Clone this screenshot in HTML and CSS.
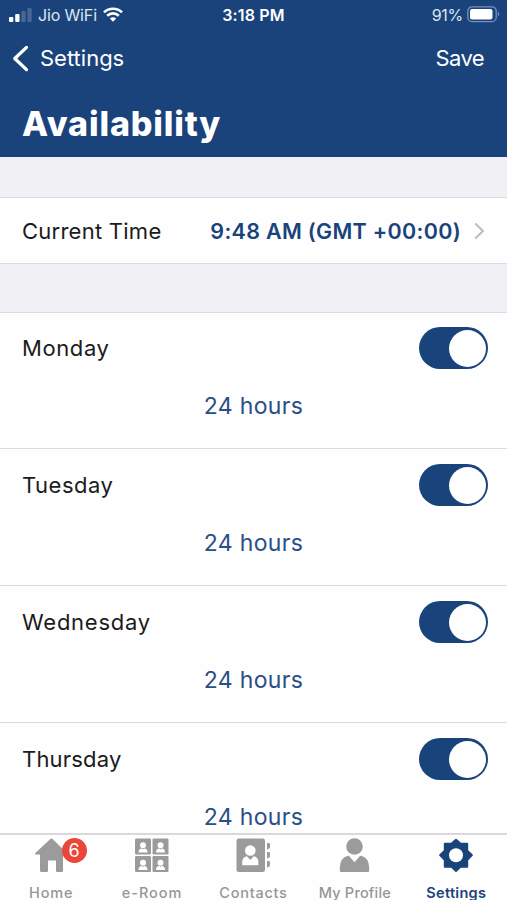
FILE: index.html
```html
<!DOCTYPE html>
<html lang="en">
<head>
<meta charset="utf-8">
<title>Availability</title>
<link rel="stylesheet" href="styles.css">
</head>
<body>
<div class="screen">
  <header class="header">
    <div class="status">
      <div class="status-left">
        <svg class="signal" width="23" height="14" viewBox="0 0 23 14" fill="#fff"><rect x="0" y="9" width="4.3" height="5" rx="1"/><rect x="6.2" y="6" width="4.3" height="8" rx="1"/><rect x="12.4" y="3" width="4.3" height="11" rx="1" opacity=".2"/><rect x="18.4" y="0" width="4.3" height="14" rx="1" opacity=".2"/></svg>
        <span class="carrier">Jio WiFi</span>
        <svg class="wifi" width="20" height="15" viewBox="0 0 20 15" fill="none" stroke="#fff" stroke-width="2.7"><path d="M1 5.4C6 .5 14 .5 19 5.4M4.2 8.8c3.3-3.2 8.3-3.2 11.6 0"/><path d="M6.8 11.4c1.8-1.7 4.6-1.7 6.4 0L10 14.7z" fill="#fff" stroke="none"/></svg>
      </div>
      <span class="clock">3:18 PM</span>
      <div class="status-right">
        <span class="percent">91%</span>
        <svg class="battery" width="33" height="17" viewBox="0 0 33 17"><rect x=".8" y=".8" width="28.4" height="14.8" rx="4.2" fill="none" stroke="#7592bb" stroke-width="1.3"/><rect x="3" y="3" width="22.5" height="10.5" rx="2" fill="#fff"/><path d="M30.8 5.5q3 2.5 0 5z" fill="#7592bb"/></svg>
      </div>
    </div>
    <nav class="nav">
      <div class="back">
        <svg width="17" height="27" viewBox="0 0 17 27" fill="none" stroke="#fff" stroke-width="3.3" stroke-linecap="round" stroke-linejoin="round"><path d="M14.500 2.400 2.800 13.500 14.500 24.600"/></svg>
        <span class="back-label">Settings</span>
      </div>
      <span class="save">Save</span>
    </nav>
    <h1 class="title">Availability</h1>
  </header>

  <main class="content">
    <section class="time-row">
      <span class="label current">Current Time</span>
      <span class="time">9:48 AM (GMT +00:00)</span>
      <svg class="chevron" width="11" height="18" viewBox="0 0 11 18" fill="none" stroke="#bfbfc3" stroke-width="2.2"><path d="m1.3 1.5 7.6 7.5-7.6 7.5"/></svg>
    </section>
    <section class="days">
      <div class="day first"><div class="day-head"><span class="label monday">Monday</span><span class="toggle"></span></div><div class="hours">24 hours</div></div>
      <div class="day"><div class="day-head"><span class="label tuesday">Tuesday</span><span class="toggle"></span></div><div class="hours">24 hours</div></div>
      <div class="day"><div class="day-head"><span class="label wednesday">Wednesday</span><span class="toggle"></span></div><div class="hours">24 hours</div></div>
      <div class="day"><div class="day-head"><span class="label thursday">Thursday</span><span class="toggle"></span></div><div class="hours">24 hours</div></div>
    </section>
  </main>

  <footer class="tabs">
    <div class="tab">
      <div class="icon">
        <svg width="36" height="36" viewBox="0 0 36 36" fill="#9b9b9b"><path d="M17.600.8q.8-.7 1.600 0L34 15q1.200 1.300-.6 1.400H30V32.500q0 1.500-1.500 1.500H24q-1 0-1-1V22.500h-8V33q0 1-1 1H8.500Q7 34 7 32.500V16.400H3q-1.800-.1-.6-1.400z"/></svg>
        <span class="badge">6</span>
      </div>
      <span class="tab-label home">Home</span>
    </div>
    <div class="tab">
      <div class="icon">
        <svg width="36" height="36" viewBox="0 0 36 36"><defs><g id="seat"><rect width="16" height="16" rx="1.2" fill="#9b9b9b"/><circle cx="8" cy="6.700" r="3" fill="#fff"/><path d="M3.500 14q0-3.800 3.500-4l1 1 1-1q3.500.2 3.500 4z" fill="#fff"/></g></defs><use href="#seat" x="1" y=".5"/><use href="#seat" x="18.500" y=".5"/><use href="#seat" x="1" y="18"/><use href="#seat" x="18.500" y="18"/></svg>
      </div>
      <span class="tab-label room">e-Room</span>
    </div>
    <div class="tab">
      <div class="icon">
        <svg width="36" height="36" viewBox="0 0 36 36"><rect x="1.500" y=".5" width="28.500" height="33.500" rx="2.200" fill="#9b9b9b"/><circle cx="15.300" cy="12.500" r="5.300" fill="#fff"/><path d="M7.200 26.500v-2q0-5.500 4.700-6.200l3.400 3.700 3.400-3.700q4.700.7 4.700 6.200v2q0 .7-.7.7H7.900q-.7 0-.7-.7z" fill="#fff"/><path d="M32 5h2q1 0 1 1v3.500q0 1-1 1l-2 1.200zM32 14h2q1 0 1 1v3.500q0 1-1 1l-2 1.200zM32 23h2q1 0 1 1v3.500q0 1-1 1l-2 1.200z" fill="#9b9b9b"/></svg>
      </div>
      <span class="tab-label contacts">Contacts</span>
    </div>
    <div class="tab">
      <div class="icon">
        <svg width="36" height="36" viewBox="0 0 36 36" fill="#9b9b9b"><circle cx="17.500" cy="8.500" r="8.300"/><path d="M10.900 17.800q.8-.3 1.400.5L17.500 24.200l5.200-5.900q.6-.8 1.400-.5Q32.200 20 32.200 30v2.500q0 1.500-1.500 1.500H4.300q-1.500 0-1.500-1.500V30q0-10 8.100-12.200z"/></svg>
      </div>
      <span class="tab-label profile">My Profile</span>
    </div>
    <div class="tab active">
      <div class="icon">
        <svg width="36" height="36" viewBox="0 0 36 36"><path d="m18 1.700 4.200 3.600q.4.300 1 .3h6.100v6.200q0 .6.300 1L34 17.200l-4.400 4.400q-.3.400-.3 1v6.200h-6.100q-.6 0-1 .3L18 33l-4.200-3.900q-.4-.3-1-.3H6.700v-6.200q0-.6-.3-1L2 17.200l4.400-4.400q.3-.4.3-1V5.600h6.100q.6 0 1-.3z" fill="#19437b" stroke="#19437b" stroke-width="1.800" stroke-linejoin="round"/><circle cx="18" cy="17.200" r="7" fill="#fff"/></svg>
      </div>
      <span class="tab-label settings">Settings</span>
    </div>
  </footer>
</div>
</body>
</html>
```
FILE: styles.css
```css
* { box-sizing: border-box; }
body { margin: 0; font-family: Inter, "Liberation Sans", sans-serif; background: #fefefe; }
svg { display: block; flex: none; }
.screen { width: 507px; height: 900px; display: flex; flex-direction: column; overflow: hidden; }
.header { height: 157px; flex: none; background: #1a437b; color: #fff; }
.status { height: 30px; padding: 0 7px 0 9px; display: grid; grid-template-columns: 1fr auto 1fr; align-items: center; font-size: 16px; line-height: 30px; }
.status-left, .status-right { display: flex; align-items: center; color: #dce5f2; }
.status-right { justify-content: flex-end; gap: 4px; }
.battery { margin-top: -2px; }
.carrier { margin-left: 6px; width: 60px; letter-spacing: -.15px; white-space: nowrap; }
.wifi { margin-left: 5px; margin-top: -1px; }
.clock { font-weight: 600; letter-spacing: .15px; margin-right: 2px; }
.percent { letter-spacing: -.3px; }
.nav { height: 56px; padding: 0 23px 0 12px; display: flex; justify-content: space-between; align-items: center; font-size: 22px; }
.back { display: flex; align-items: center; gap: 11px; }
.save { letter-spacing: -.6px; }
.title { margin: 14px 0 0 22px; font-size: 34px; line-height: 48px; font-weight: 800; letter-spacing: .85px; }
.content { height: 676px; flex: none; padding-top: 40px; overflow: hidden; background: #f0f0f5; }
.time-row { height: 67px; padding: 0 22px 0 22px; display: flex; align-items: center; background: #fefefe; border: solid #dcdce0; border-width: 1px 0; }
.label { font-size: 22px; line-height: 30px; color: #1b1b1d; white-space: nowrap; }
.current { letter-spacing: .25px; }
.monday { letter-spacing: .6px; }
.tuesday { letter-spacing: .5px; }
.wednesday { letter-spacing: .75px; }
.thursday { letter-spacing: .2px; }
.time { margin-left: auto; color: #19437b; font-size: 21.5px; font-weight: 600; letter-spacing: .3px; white-space: nowrap; }
.chevron { margin-left: 13px; }
.days { margin-top: 48px; background: #fefefe; border-top: 1px solid #dcdce0; }
.day { height: 137px; padding: 15px 19px 0 22px; border-bottom: 1px solid #dcdce0; }
.day-head { display: flex; justify-content: space-between; align-items: center; height: 42px; }
.day.first { height: 136px; padding-top: 14px; }
.toggle { width: 69px; height: 42px; padding: 2.500px; border-radius: 21px; background: #19437b; display: flex; justify-content: flex-end; }
.toggle::before { content: ""; width: 37px; height: 37px; border-radius: 50%; background: #fefefe; }
.hours { margin: 22px 3px 0 0; text-align: center; font-size: 23px; line-height: 30px; color: #2a4f85; letter-spacing: .35px; }
.tabs { height: 67px; flex: none; border-top: 2px solid #d9d9db; display: grid; grid-template-columns: repeat(5, 1fr); background: #fefefe; overflow: hidden; }
.tab { display: flex; flex-direction: column; align-items: center; padding-top: 3px; }
.icon { position: relative; height: 36px; }
.badge { position: absolute; left: 29px; top: 0; width: 25px; height: 25px; border-radius: 50%; background: #ea4639; color: #fff; font-size: 18px; line-height: 25px; text-align: center; }
.tab-label { margin-top: 10px; font-size: 14.500px; line-height: 18px; font-weight: 500; color: #969696; white-space: nowrap; }
.home { letter-spacing: .8px; padding-left: 1px; }
.room { letter-spacing: .95px; }
.contacts { letter-spacing: .75px; }
.profile { letter-spacing: .2px; }
.settings { letter-spacing: .3px; }
.active .tab-label { color: #19437b; font-weight: 600; }
```
